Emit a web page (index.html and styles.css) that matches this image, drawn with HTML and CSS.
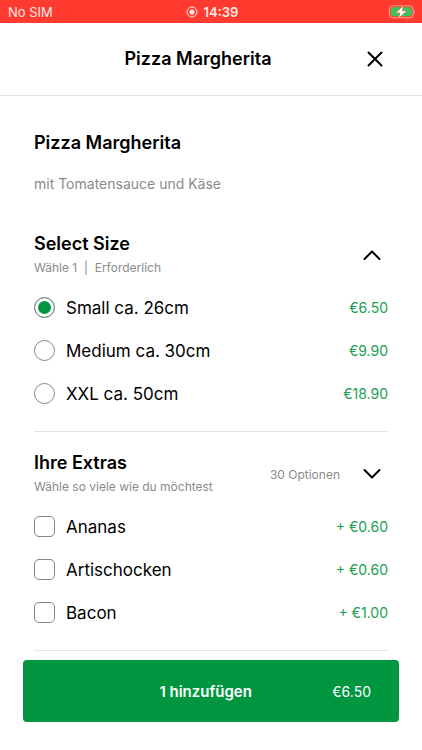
FILE: index.html
```
<!DOCTYPE html>
<html lang="de">
<head>
  <meta charset="UTF-8">
  <meta name="viewport" content="width=device-width, initial-scale=1.0">
  <title>Pizza Margherita</title>
  <link rel="stylesheet" href="styles.css">
</head>
<body>
  <div class="status-bar">
    <span>No SIM</span>
    <span class="status-time">
      <svg width="12" height="12" viewBox="0 0 12 12" aria-hidden="true">
        <circle cx="6" cy="6" r="5" fill="none" stroke="currentColor" stroke-width="1"/>
        <circle cx="6" cy="6" r="2.6" fill="currentColor"/>
      </svg>
      14:39
    </span>
    <svg class="battery" width="27" height="14" viewBox="0 0 27 14" aria-hidden="true">
      <rect x="0.5" y="0.8" width="23.5" height="12" rx="3.2" fill="none" stroke="#ff9d94"/>
      <rect x="2" y="2.3" width="20.5" height="9" rx="2" fill="#35c759"/>
      <path d="M25.2 4.8c1.3.6 1.3 3.4 0 4z" fill="#ff9d94"/>
      <path d="M14.8 0.2L6.6 7.9h4.4L9.4 13.6l8.4-7.8h-4.7z" fill="#fff" stroke="#ff3b30" stroke-width="0.5"/>
    </svg>
  </div>

  <header class="top-bar">
    <div class="top-title">Pizza Margherita</div>
    <button type="button" class="icon-btn" aria-label="Schließen">
      <svg width="16" height="16" viewBox="0 0 16 16">
        <path d="M1.5 1.5l13 13M14.5 1.5l-13 13"/>
      </svg>
    </button>
  </header>

  <main class="content">
    <div class="intro">
      <h1>Pizza Margherita</h1>
      <p>mit Tomatensauce und Käse</p>
    </div>

    <section class="group">
      <div class="group-head">
        <div class="group-text">
          <h2 id="size-title">Select Size</h2>
          <p class="hint">Wähle 1&nbsp; |&nbsp; Erforderlich</p>
        </div>
        <button type="button" class="icon-btn" aria-label="Einklappen" aria-expanded="true">
          <svg width="18" height="12" viewBox="0 0 18 12">
            <path d="M1.5 10L9 2.5l7.5 7.5"/>
          </svg>
        </button>
      </div>
      <div role="radiogroup" aria-labelledby="size-title">
        <label class="option">
          <input type="radio" name="size" checked>
          <span class="name">Small ca. 26cm</span>
          <span class="price">€6.50</span>
        </label>
        <label class="option">
          <input type="radio" name="size">
          <span class="name">Medium ca. 30cm</span>
          <span class="price">€9.90</span>
        </label>
        <label class="option">
          <input type="radio" name="size">
          <span class="name">XXL ca. 50cm</span>
          <span class="price">€18.90</span>
        </label>
      </div>
    </section>

    <section class="group">
      <div class="group-head">
        <div class="group-text">
          <h2 id="extras-title">Ihre Extras</h2>
          <p class="hint">Wähle so viele wie du möchtest</p>
        </div>
        <span class="count">30 Optionen</span>
        <button type="button" class="icon-btn" aria-label="Ausklappen" aria-expanded="false">
          <svg width="18" height="12" viewBox="0 0 18 12">
            <path d="M1.5 2L9 9.5 16.5 2"/>
          </svg>
        </button>
      </div>
      <div role="group" aria-labelledby="extras-title">
        <label class="option">
          <input type="checkbox">
          <span class="name">Ananas</span>
          <span class="price">+ €0.60</span>
        </label>
        <label class="option">
          <input type="checkbox">
          <span class="name">Artischocken</span>
          <span class="price">+ €0.60</span>
        </label>
        <label class="option">
          <input type="checkbox">
          <span class="name">Bacon</span>
          <span class="price">+ €1.00</span>
        </label>
      </div>
    </section>
  </main>

  <footer class="footer">
    <button type="button" class="add-btn">
      <span class="add-label">1 hinzufügen</span>
      <span class="add-price">€6.50</span>
    </button>
  </footer>
</body>
</html>
```

FILE: styles.css
```
* {
  box-sizing: border-box;
}

body {
  margin: 0;
  min-height: 100vh;
  display: flex;
  flex-direction: column;
  background-color: #fff;
  color: #000;
  font-family: Inter, "Liberation Sans", sans-serif;
}

h1, h2, p {
  margin: 0;
}

button {
  font-family: inherit;
  border: 0;
  padding: 0;
  cursor: pointer;
}

/* Status bar */
.status-bar {
  display: grid;
  grid-template-columns: 1fr auto 1fr;
  align-items: center;
  height: 23px;
  padding: 0 6px 0 8px;
  background-color: #ff3b30;
  color: #ffe9e7;
  font-size: 13px;
}
.status-time {
  display: flex;
  align-items: center;
  gap: 6px;
  font-weight: 600;
}
.battery {
  justify-self: end;
}

/* Title bar */
.top-bar {
  display: flex;
  align-items: center;
  height: 73px;
  padding: 0 34px;
  border-bottom: 1px solid #e4e4e4;
}
.top-title {
  flex: 1;
  text-align: center;
  font-size: 18px;
  line-height: 24px;
  font-weight: 600;
}

.icon-btn {
  display: flex;
  align-items: center;
  justify-content: center;
  width: 26px;
  height: 26px;
  background: none;
  color: #000;
}
.icon-btn svg {
  fill: none;
  stroke: currentColor;
  stroke-width: 2;
  stroke-linecap: round;
  stroke-linejoin: round;
}

/* Content */
.content {
  flex: 1;
  padding: 35px 34px 0;
}
.intro {
  display: flex;
  flex-direction: column;
  gap: 17px;
  padding-bottom: 17px;
}
.intro p {
  color: #8a8a8a;
  font-size: 14px;
  line-height: 24px;
}
h1, h2 {
  font-size: 18px;
  line-height: 24px;
  font-weight: 600;
}

.group {
  padding: 19px 0 16px;
  border-bottom: 1px solid #e4e4e4;
}
.group-head {
  display: flex;
  align-items: center;
  padding-bottom: 8px;
}
.group-head .icon-btn {
  width: 32px;
}
.group-text {
  flex: 1;
}
.hint {
  margin-top: 2px;
  line-height: 20px;
}
.hint, .count {
  color: #8a8a8a;
  font-size: 12px;
}
.count {
  margin-right: 16px;
}

.option {
  display: flex;
  align-items: center;
  gap: 11px;
  height: 43px;
  cursor: pointer;
}
.option input {
  appearance: none;
  width: 21px;
  height: 21px;
  margin: 0;
  border: 1px solid #858585;
  border-radius: 5px;
  background-color: #fff;
}
.option input[type="radio"] {
  border-radius: 50%;
}
.option input:checked {
  background-color: #00963f;
}
.option input[type="radio"]:checked {
  box-shadow: inset 0 0 0 3px #fff;
}
.name {
  flex: 1;
  font-size: 17px;
}
.price {
  color: #1a9e50;
  font-size: 14px;
}

/* Add to cart */
.footer {
  padding: 9px 23px 28px;
}
.add-btn {
  display: flex;
  align-items: center;
  width: 100%;
  height: 62px;
  padding: 0 28px 0 56px;
  border-radius: 4px;
  background-color: #00963f;
  color: #fff;
}
.add-label {
  flex: 1;
  font-size: 15px;
  font-weight: 600;
}
.add-price {
  font-size: 14px;
}
```
